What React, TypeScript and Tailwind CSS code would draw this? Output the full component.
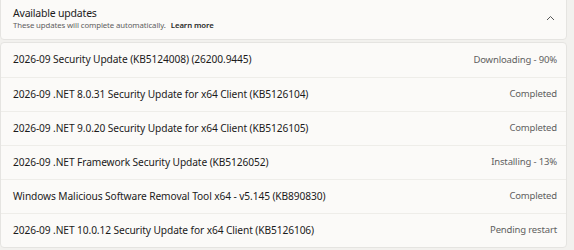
const updates = [
  { name: "2026-09 Security Update (KB5124008) (26200.9445)", status: "Downloading - 90%" },
  { name: "2026-09 .NET 8.0.31 Security Update for x64 Client (KB5126104)", status: "Completed" },
  { name: "2026-09 .NET 9.0.20 Security Update for x64 Client (KB5126105)", status: "Completed" },
  { name: "2026-09 .NET Framework Security Update (KB5126052)", status: "Installing - 13%" },
  { name: "Windows Malicious Software Removal Tool x64 - v5.145 (KB890830)", status: "Completed" },
  { name: "2026-09 .NET 10.0.12 Security Update for x64 Client (KB5126106)", status: "Pending restart" },
];

export default function App() {
  return (
    <div
      className="w-[574px] h-[250px] overflow-hidden bg-[#f2f1ee] pr-[7px] text-[#1b1b1b]"
      style={{ fontFamily: '"Noto Sans", "Segoe UI", sans-serif' }}
    >
      {/* Expander header */}
      <div className="h-[41px] -mt-px flex items-center justify-between bg-[#fbfaf8] border border-[#e5e4e1] rounded-b-[4px] pl-3 pr-[11px]">
        <div className="flex flex-col -mt-[4px]">
          <span className="text-[10.5px] leading-[14px] tracking-[-0.2px]">Available updates</span>
          <span className="text-[7.8px] leading-[10px] text-[#606060] tracking-[-0.1px]">
            These updates will complete automatically.
            <span className="ml-[5px] font-semibold text-[#2a2a2a]">Learn more</span>
          </span>
        </div>
        <svg width="9" height="6" viewBox="0 0 9 6" className="-mt-[3px]">
          <path d="M1 5 L4.5 1.5 L8 5" fill="none" stroke="#555" strokeWidth="1" />
        </svg>
      </div>

      {/* Update list */}
      <div className="mt-[2px] bg-[#fbfaf8] border border-[#e5e4e1] rounded-[4px]">
        {updates.map((u, i) => (
          <div
            key={i}
            className={
              "h-[34px] flex items-center justify-between pl-3 pr-[9px] " +
              (i > 0 ? "border-t border-[#eeede9]" : "")
            }
          >
            <span className="text-[10.2px] tracking-[-0.1px]">{u.name}</span>
            <span className="text-[9.5px] tracking-[-0.15px] text-[#5f5f5f]">{u.status}</span>
          </div>
        ))}
      </div>
    </div>
  );
}
